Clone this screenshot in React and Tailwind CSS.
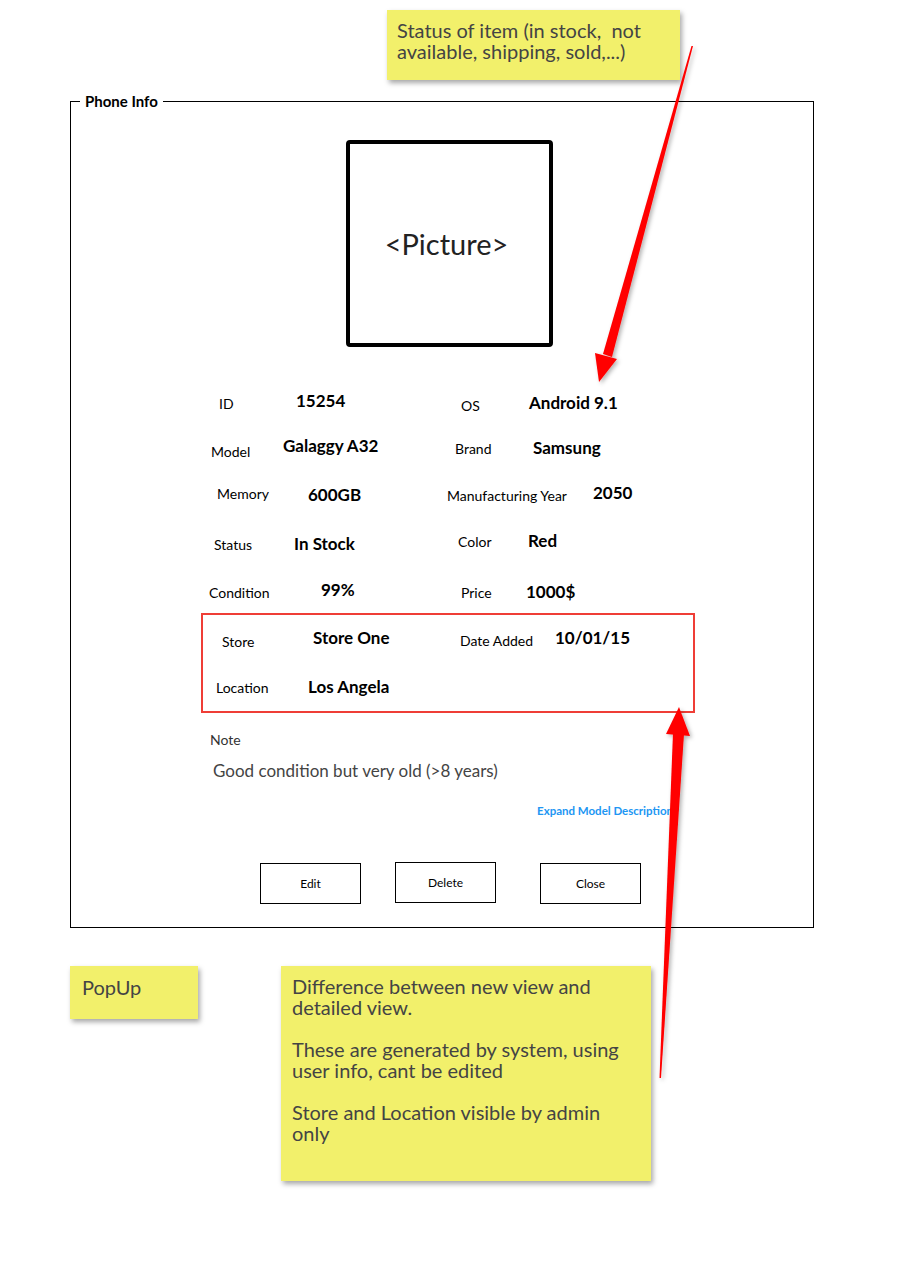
import React from "react";

const F = "font-['Lato','Noto_Sans',sans-serif]";

function Note({ className, children }) {
  return (
    <div className={`bg-[#f2f06b] shadow-[2px_3px_5px_rgba(0,0,0,0.35)] text-[#444] ${className}`}>{children}</div>
  );
}

export default function App() {
  return (
    <div className={`relative w-[913px] h-[1282px] bg-white text-black ${F}`}>
      {/* top sticky note */}
      <div className="pt-[10px] pl-[387px]">
        <Note className="w-[293px] h-[70px] pt-[10px] pl-[10px] text-[20px] leading-[21px]">
          <div>Status of item (in stock,&nbsp; not</div>
          <div>available, shipping, sold,...)</div>
        </Note>
      </div>

      {/* fieldset */}
      <fieldset className="ml-[70px] mt-[12px] w-[744px] border border-black pb-[23px]">
        <legend className="ml-[9px] px-[5px] text-[15px] leading-[18px] font-bold">Phone Info</legend>

        <div className="ml-[275px] mt-[30px] w-[207px] h-[207px] border-[4px] border-black rounded-[4px] flex items-center justify-center">
          <span className="text-[29px] text-[#222] leading-none mr-[6px]">&lt;Picture&gt;</span>
        </div>

        <div className="ml-[129px] mt-[32px] w-[500px]">
          {/* row 1 */}
          <div className="flex items-center h-[46px]">
            <div className="ml-[19px] w-[77px] text-[14px] mt-[2px]">ID</div>
            <div className="w-[165px] text-[17px] font-bold mb-[2px]">15254</div>
            <div className="w-[68px] text-[14px] mt-[6px]">OS</div>
            <div className="text-[17px] font-bold mt-[1px]">Android 9.1</div>
          </div>
          {/* row 2 */}
          <div className="flex items-center h-[46px]">
            <div className="ml-[11px] w-[72px] text-[14px] mt-[6px]">Model</div>
            <div className="w-[172px] text-[17px] font-bold mb-[4px]">Galaggy A32</div>
            <div className="w-[78px] text-[14px]">Brand</div>
            <div className="text-[17px] font-bold">Samsung</div>
          </div>
          {/* row 3 */}
          <div className="flex items-center h-[47px]">
            <div className="ml-[17px] w-[91px] text-[14px] mb-[2px]">Memory</div>
            <div className="w-[139px] text-[17px] font-bold">600GB</div>
            <div className="w-[146px] text-[14px] mt-[2px]">Manufacturing Year</div>
            <div className="text-[17px] font-bold mb-[4px]">2050</div>
          </div>
          {/* row 4 */}
          <div className="flex items-center h-[48px]">
            <div className="ml-[14px] w-[80px] text-[14px] mt-[4px]">Status</div>
            <div className="w-[164px] text-[17px] font-bold mt-[4px]">In Stock</div>
            <div className="w-[70px] text-[14px] mb-[2px]">Color</div>
            <div className="text-[17px] font-bold mb-[2px]">Red</div>
          </div>
          {/* row 5 */}
          <div className="flex items-center h-[47px]">
            <div className="ml-[9px] w-[112px] text-[14px] mt-[5px]">Condition</div>
            <div className="w-[140px] text-[17px] font-bold">99%</div>
            <div className="w-[65px] text-[14px] mt-[5px]">Price</div>
            <div className="text-[17px] font-bold mt-[5px]">1000$</div>
          </div>
          {/* red box */}
          <div className="ml-[1px] w-[494px] border-2 border-[#ef3e36]">
            <div className="flex items-center h-[48px]">
              <div className="ml-[19px] w-[91px] text-[14px] mt-[4px]">Store</div>
              <div className="w-[147px] text-[17px] font-bold mb-[2px]">Store One</div>
              <div className="w-[95px] text-[14px] mt-[2px]">Date Added</div>
              <div className="text-[17px] font-bold mb-[2px]">10/01/15</div>
            </div>
            <div className="flex items-center h-[48px]">
              <div className="ml-[13px] w-[92px] text-[14px]">Location</div>
              <div className="text-[17px] font-bold">Los Angela</div>
            </div>
          </div>

          <div className="ml-[10px] mt-[18px] text-[14px] leading-[18px] text-[#333]">Note</div>
          <div className="ml-[13px] mt-[11px] text-[17px] leading-[22px] text-[#444]">Good condition but very old (&gt;8 years)</div>
          <div className="mt-[22px] w-[473px] text-right text-[11.5px] leading-[14px] font-bold text-[#2196f3]">Expand Model Description</div>

          <div className="flex items-start mt-[45px]">
            <div className="ml-[60px] w-[101px] h-[41px] border border-black flex items-center justify-center text-[12px]">Edit</div>
            <div className="ml-[34px] -mt-[1px] w-[101px] h-[41px] border border-black flex items-center justify-center text-[12px]">Delete</div>
            <div className="ml-[44px] w-[101px] h-[41px] border border-black flex items-center justify-center text-[12px]">Close</div>
          </div>
        </div>
      </fieldset>

      {/* bottom notes */}
      <div className="flex items-start mt-[38px]">
        <Note className="ml-[70px] w-[128px] h-[53px] pl-[12px] pt-[11px] text-[20px] leading-[21px] text-[#222]">PopUp</Note>
        <Note className="ml-[83px] w-[370px] h-[215px] pl-[11px] pt-[10px] text-[20px] leading-[21px]">
          <div>Difference between new view and</div>
          <div>detailed view.</div>
          <div className="h-[21px]"></div>
          <div>These are generated by system, using</div>
          <div>user info, cant be edited</div>
          <div className="h-[21px]"></div>
          <div>Store and Location visible by admin</div>
          <div>only</div>
        </Note>
      </div>

      {/* arrows overlay */}
      <svg className="absolute left-0 top-0 pointer-events-none" width="913" height="1282" viewBox="0 0 913 1282">
        <defs>
          <filter id="sh" x="-20%" y="-20%" width="140%" height="140%">
            <feDropShadow dx="2" dy="2" stdDeviation="2" floodColor="#000" floodOpacity="0.3" />
          </filter>
        </defs>
        <g fill="#ff0000" filter="url(#sh)">
          <polygon points="691.5,46 693,46 612,357 603,354" />
          <polygon points="595,353 617,359 599,382" />
          <polygon points="673,733 684,734 661,1078 659.5,1078" />
          <polygon points="666,734 690,736 679,707" />
        </g>
      </svg>
    </div>
  );
}
